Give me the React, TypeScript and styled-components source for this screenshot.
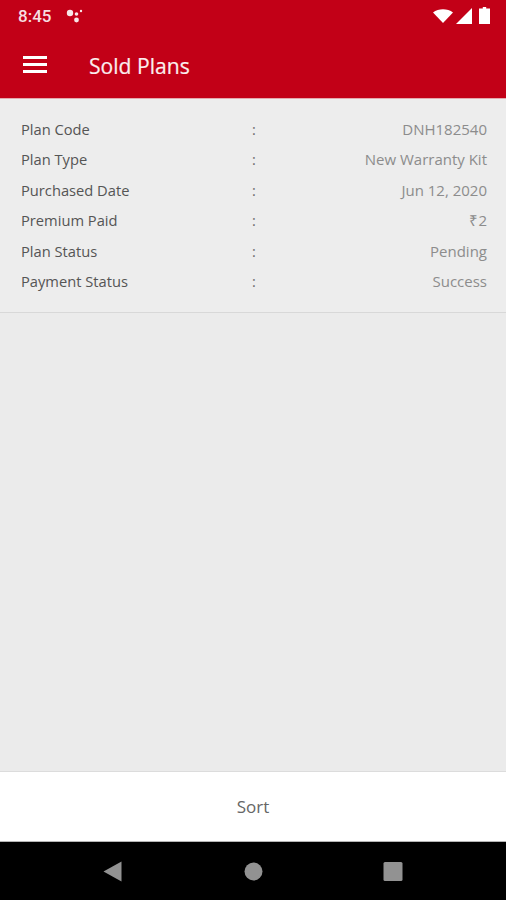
import React from "react";
import styled, { createGlobalStyle } from "styled-components";

const Global = createGlobalStyle`
  html, body { margin: 0; padding: 0; width: 506px; height: 900px; overflow: hidden; background: #ebebeb; }
  * { box-sizing: border-box; }
`;

const Screen = styled.div`
  width: 506px;
  height: 900px;
  display: flex;
  flex-direction: column;
  background: #ebebeb;
  font-family: "Open Sans", "Liberation Sans", sans-serif;
`;

const Header = styled.header`
  height: 99px;
  flex: none;
  background: #c20017;
  color: #fff;
  border-bottom: 1px solid #e3a9ae;
  display: flex;
  flex-direction: column;
`;

const StatusBar = styled.div`
  height: 33px;
  flex: none;
  padding: 0 16px 2px 18px;
  display: flex;
  align-items: center;
  justify-content: space-between;
`;

const StatusLeft = styled.div`
  display: flex;
  align-items: center;
  gap: 14px;
`;

const Time = styled.span`
  font-family: "Roboto", sans-serif;
  font-size: 17px;
  font-weight: 500;
  color: #f6dfe1;
`;

const StatusRight = styled.div`
  display: flex;
  align-items: center;
  gap: 3px;
`;

const AppBar = styled.div`
  flex: 1;
  display: flex;
  align-items: center;
  padding: 0 0 1px 23px;
  gap: 42px;
`;

const Title = styled.h1`
  margin: 0;
  font-size: 21.1px;
  font-weight: 400;
  color: #fbeeee;
  -webkit-text-stroke: 0.2px #fbeeee;
`;

const Card = styled.section`
  height: 214px;
  flex: none;
  padding: 15px 19px 0 21px;
  border-bottom: 1px solid #d8d8d8;
  background: #ededed;
`;

const Row = styled.div`
  height: 30.4px;
  line-height: 30.4px;
  display: grid;
  grid-template-columns: 231px 10px 1fr;
  align-items: baseline;
`;

const Label = styled.span`
  color: #555;
  font-size: 14.7px;
`;

const Colon = styled.span`
  color: #6a6a6a;
  font-size: 14.5px;
`;

const Value = styled.span`
  color: #8c8c8c;
  font-size: 15px;
  text-align: right;
`;

const Spacer = styled.div`
  flex: 1;
`;

const SortBar = styled.button`
  height: 71px;
  flex: none;
  border: 0;
  border-top: 1px solid #dcdcdc;
  border-bottom: 1px solid #b5b5b5;
  background: #fff;
  color: #666;
  font-family: inherit;
  font-size: 17px;
  padding: 0;
`;

const NavBar = styled.nav`
  height: 58px;
  flex: none;
  background: #000;
  display: flex;
  align-items: center;
  justify-content: center;
  gap: 120px;
`;

const rows: [string, string][] = [
  ["Plan Code", "DNH182540"],
  ["Plan Type", "New Warranty Kit"],
  ["Purchased Date", "Jun 12, 2020"],
  ["Premium Paid", "₹2"],
  ["Plan Status", "Pending"],
  ["Payment Status", "Success"],
];

export default function App() {
  return (
    <Screen>
      <Global />
      <Header>
        <StatusBar>
          <StatusLeft>
            <Time>8:45</Time>
            <svg width="18" height="14" viewBox="0 0 18 14" fill="#f8e6e7">
              <circle cx="5" cy="4" r="3.2" />
              <circle cx="11.5" cy="5" r="1.8" />
              <circle cx="11.5" cy="11" r="2.4" />
              <circle cx="16" cy="2" r="1.2" />
            </svg>
          </StatusLeft>
          <StatusRight>
            <svg width="20" height="14" viewBox="0 0 20 14" fill="#fff">
              <path d="M0 3.5 C5.5 -0.8 14.5 -0.8 20 3.5 L10 14 Z" />
            </svg>
            <svg width="16" height="16" viewBox="0 0 16 16" fill="#fff">
              <path d="M16 0 V16 H0 Z" />
            </svg>
            <svg width="15" height="17" viewBox="0 0 15 17" fill="#fff">
              <path d="M7.8 0 H11.2 V1.6 H15 V17 H4 V1.6 H7.8 Z" />
            </svg>
          </StatusRight>
        </StatusBar>
        <AppBar>
          <svg width="24" height="18" viewBox="0 0 24 18" fill="#fff">
            <rect y="0" width="24" height="3" />
            <rect y="7" width="24" height="3" />
            <rect y="14" width="24" height="3" />
          </svg>
          <Title>Sold Plans</Title>
        </AppBar>
      </Header>
      <Card>
        {rows.map(([label, value]) => (
          <Row key={label}>
            <Label>{label}</Label>
            <Colon>:</Colon>
            <Value>{value}</Value>
          </Row>
        ))}
      </Card>
      <Spacer />
      <SortBar>Sort</SortBar>
      <NavBar>
        <svg width="21" height="21" viewBox="0 0 21 21" fill="#929292">
          <path d="M18.5 0.5 V20.5 L0.5 10.5 Z" />
        </svg>
        <svg width="19" height="19" viewBox="0 0 19 19" fill="#929292">
          <circle cx="9.5" cy="9.5" r="9" />
        </svg>
        <svg width="20" height="19" viewBox="0 0 20 19" fill="#929292">
          <rect x="0.5" width="19" height="19" rx="1.5" />
        </svg>
      </NavBar>
    </Screen>
  );
}
